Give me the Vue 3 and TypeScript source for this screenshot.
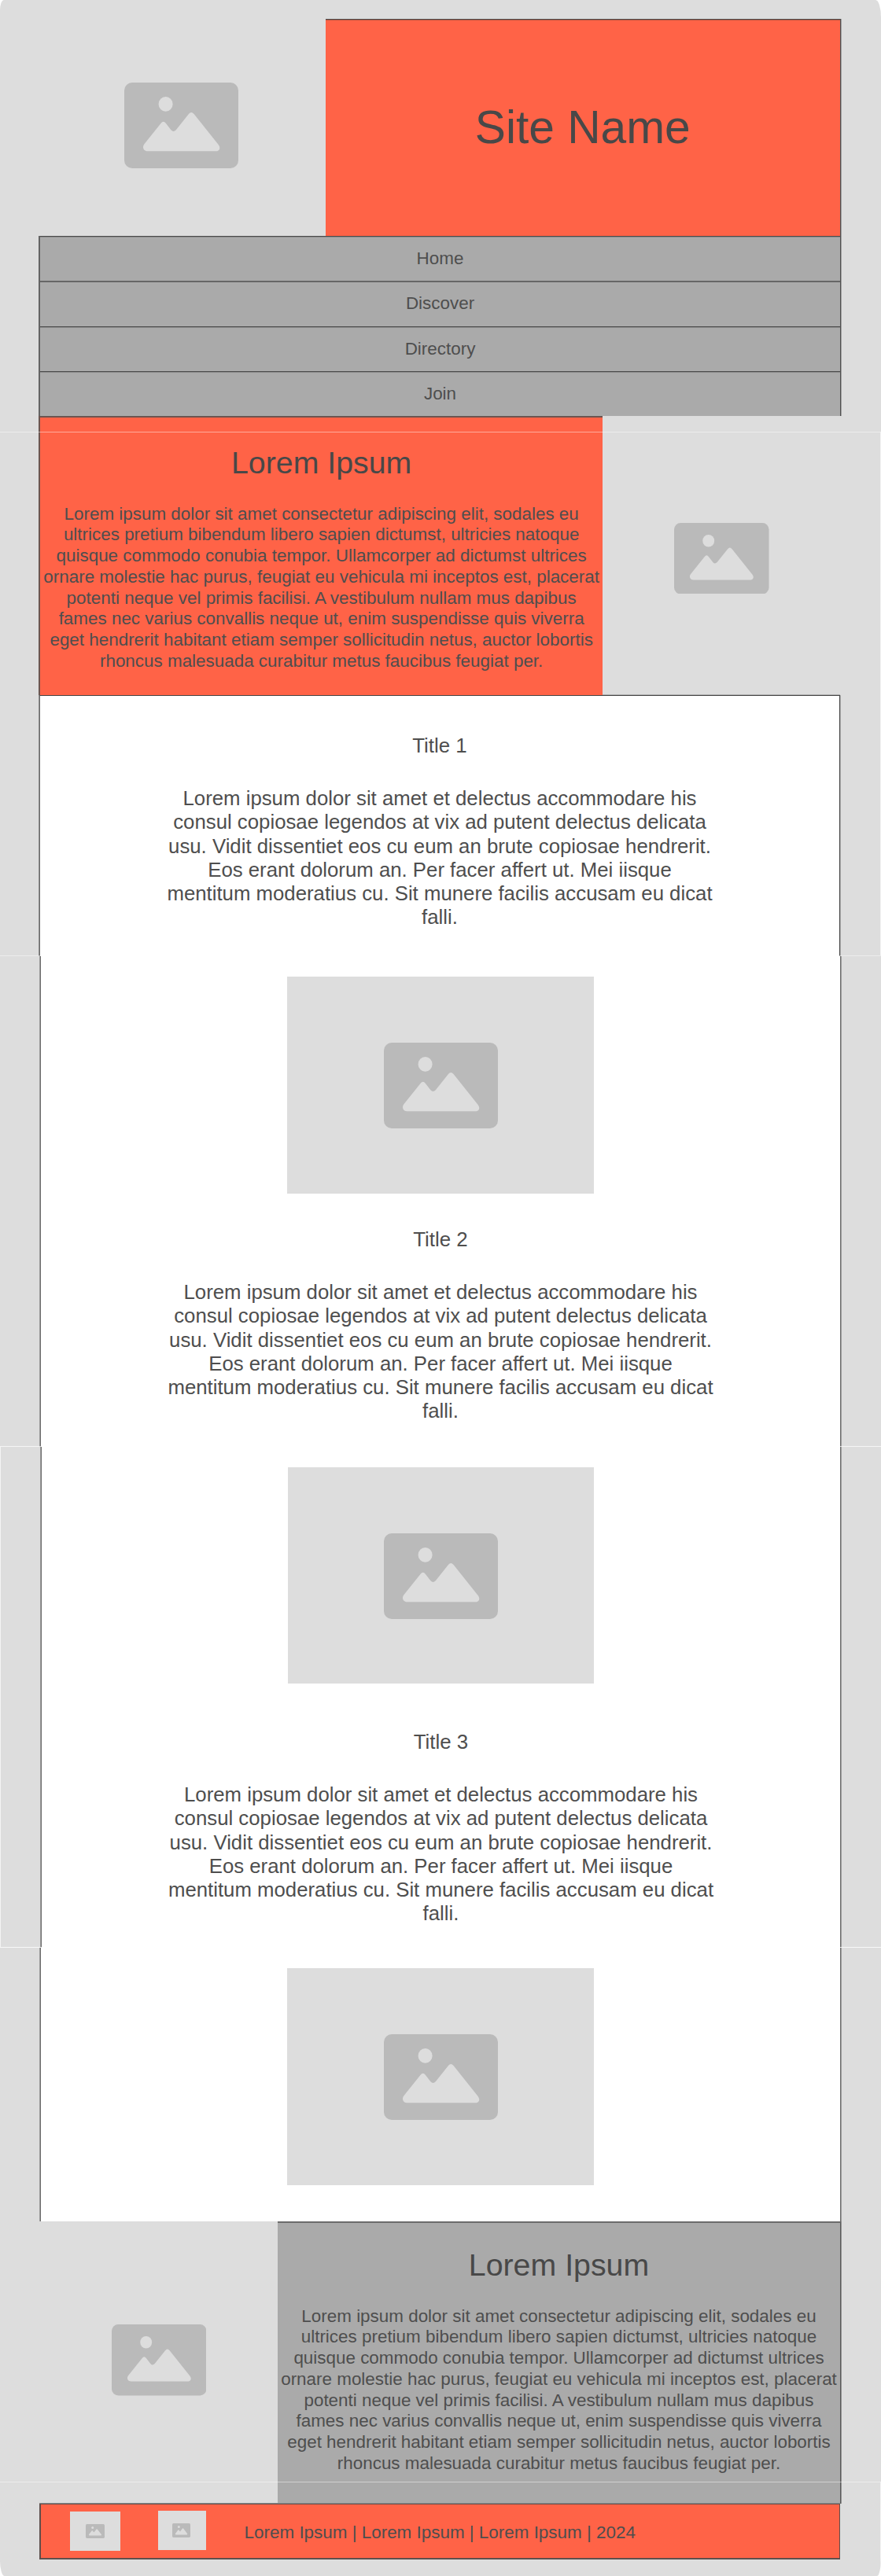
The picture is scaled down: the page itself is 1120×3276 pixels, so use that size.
<script setup lang="ts">
import { defineComponent, h } from 'vue'

const PictureIcon = defineComponent({
  name: 'PictureIcon',
  setup() {
    return () =>
      h('svg', { viewBox: '0 0 145 109', preserveAspectRatio: 'none', 'aria-hidden': 'true' }, [
        h('rect', { width: 145, height: 109, rx: 10, fill: '#bababa' }),
        h('ellipse', { cx: 52.6, cy: 27.4, rx: 9, ry: 9.4, fill: '#ddd' }),
        h('path', {
          d: 'M25.2 78.5 L46.6 51.8 Q49.7 47.8 52.8 51.8 L59.6 60.6 Q62.6 63.6 65.8 60.3 L81.9 40 Q85.2 36 88.6 40 L119.3 78.5 C123.6 84 120 87.3 116.5 87.3 H29.5 C24.5 87.3 22.5 82 25.2 78.5 Z',
          fill: '#ddd',
        }),
      ])
  },
})

interface Block {
  cls: string
  picture: boolean
  title?: string
}

const nav: string[] = ['Home', 'Discover', 'Directory', 'Join']

const intro: string[] = [
  'Lorem ipsum dolor sit amet consectetur adipiscing elit, sodales eu',
  'ultrices pretium bibendum libero sapien dictumst, ultricies natoque',
  'quisque commodo conubia tempor. Ullamcorper ad dictumst ultrices',
  'ornare molestie hac purus, feugiat eu vehicula mi inceptos est, placerat',
  'potenti neque vel primis facilisi. A vestibulum nullam mus dapibus',
  'fames nec varius convallis neque ut, enim suspendisse quis viverra',
  'eget hendrerit habitant etiam semper sollicitudin netus, auctor lobortis',
  'rhoncus malesuada curabitur metus faucibus feugiat per.',
]

const copy: string[] = [
  'Lorem ipsum dolor sit amet et delectus accommodare his',
  'consul copiosae legendos at vix ad putent delectus delicata',
  'usu. Vidit dissentiet eos cu eum an brute copiosae hendrerit.',
  'Eos erant dolorum an. Per facer affert ut. Mei iisque',
  'mentitum moderatius cu. Sit munere facilis accusam eu dicat',
  'falli.',
]

const blocks: Block[] = [
  { cls: 'one', picture: false, title: 'Title 1' },
  { cls: 'two', picture: true, title: 'Title 2' },
  { cls: 'three', picture: true, title: 'Title 3' },
  { cls: 'four', picture: true },
]
</script>

<template>
  <div class="page">
    <header class="masthead">
      <div class="logo"><PictureIcon class="icon-lg" /></div>
      <h1 class="site-name">Site Name</h1>
    </header>

    <nav class="menu">
      <a v-for="item in nav" :key="item" class="menu-item">{{ item }}</a>
    </nav>

    <section class="hero">
      <div class="panel orange">
        <h2>Lorem Ipsum</h2>
        <p><span v-for="line in intro" :key="line">{{ line }}</span></p>
      </div>
      <div class="side"><PictureIcon class="icon-md" /></div>
    </section>

    <main>
      <section v-for="b in blocks" :key="b.cls" class="block" :class="b.cls">
        <div v-if="b.picture" class="picture"><PictureIcon class="icon-lg" /></div>
        <template v-if="b.title">
          <h3>{{ b.title }}</h3>
          <p><span v-for="line in copy" :key="line">{{ line }}</span></p>
        </template>
      </section>
    </main>

    <section class="outro">
      <div class="side"><PictureIcon class="icon-md" /></div>
      <div class="panel gray">
        <h2>Lorem Ipsum</h2>
        <p><span v-for="line in intro" :key="line">{{ line }}</span></p>
      </div>
    </section>

    <footer class="footer">
      <div class="thumb a"><PictureIcon /></div>
      <div class="thumb b"><PictureIcon /></div>
      <span class="legal">Lorem Ipsum | Lorem Ipsum | Lorem Ipsum | 2024</span>
    </footer>

    <i class="seam s1"></i>
    <i class="seam s2"></i>
    <i class="seam s3"></i>
    <i class="seam s4"></i>
    <i class="seam s5"></i>
    <i class="edge e1"></i>
    <i class="edge e2"></i>
    <i class="edge e3"></i>
  </div>
</template>

<style>
body {
  margin: 0;
  background: #fff;
}
</style>

<style scoped>
.page {
  position: relative;
  box-sizing: border-box;
  width: 1120px;
  height: 3276px;
  padding-top: 24px;
  overflow: hidden;
  background: #ddd;
  border-radius: 5px 7px 5px 6px / 13px 22px 24px 19px;
  color: #4e4e4e;
  font-family: 'Liberation Sans', Arial, sans-serif;
  font-size: 22.43px;
}
.page * {
  box-sizing: border-box;
}
h1,
h2,
h3,
p {
  margin: 0;
  font-weight: 400;
  white-space: nowrap;
  text-align: center;
}
p span {
  display: block;
}
svg {
  display: block;
}
.icon-lg {
  width: 145px;
  height: 109px;
}
.icon-md {
  width: 120.5px;
  height: 90.5px;
}
.masthead {
  display: flex;
  width: 1020px;
  height: 276px;
  margin-left: 49px;
}
.logo {
  width: 364.5px;
  padding: 81px 0 0 109.2px;
}
.site-name {
  flex: 1;
  border-top: 1px solid #4a4a4a;
  border-right: 1px solid #4f4f4f;
  box-shadow: 1px 0 #a0a0a0, inset 0 1px #b8553f;
  background: #ff6347;
  color: #484848;
  font-size: 58.7px;
  line-height: 274px;
}
.menu {
  display: grid;
  grid-template-rows: 57px 58px 57px 57px;
  width: 1020px;
  margin-left: 49px;
  border-left: 2px solid #636363;
  border-right: 1px solid #4f4f4f;
  box-shadow: 1px 0 #a0a0a0;
  background: #aaa;
}
.menu-item {
  border-top: 1px solid #4a4a4a;
  box-shadow: inset 0 1px #8c8c8c;
  text-align: center;
  line-height: 56.2px;
}
.menu-item:nth-child(2) {
  border-top: 2px solid #666;
  box-shadow: none;
  line-height: 54.5px;
}
.hero {
  display: flex;
  height: 355px;
  margin-left: 49px;
}
.panel h2 {
  color: #484848;
  font-size: 39.3px;
  line-height: 46px;
}
.panel p {
  line-height: 26.76px;
}
.orange {
  width: 717.3px;
  padding-top: 34px;
  border-top: 2px solid #6b5550;
  border-left: 2px solid #6b5550;
  background: #ff6347;
}
.orange p {
  margin-top: 29.5px;
}
.hero .side {
  padding: 135.5px 0 0 90.8px;
}
.block {
  border: solid #6c6c6c;
  border-width: 0 1px 0 1px;
  box-shadow: 1px 0 #9c9c9c, -1px 0 #9c9c9c;
  background: #fff;
}
.one {
  width: 1018px;
  height: 332px;
  margin-left: 50px;
  padding-top: 47.5px;
  border-top: 1px solid #444;
  border-right-color: #444;
  box-shadow: 1px 0 #b0b0b0, 0 -1px #b0b0b0, -1px 0 #8c8c8c;
}
.two {
  width: 1018px;
  height: 624px;
  margin-left: 51px;
  padding-top: 25.5px;
}
.three {
  width: 1017px;
  height: 637px;
  margin-left: 52px;
  padding-top: 26px;
}
.four {
  width: 1018px;
  height: 348px;
  margin-left: 51px;
  padding-top: 26px;
}
.block h3 {
  font-size: 25.9px;
  line-height: 30px;
}
.two h3 {
  margin-top: 43.2px;
}
.three h3 {
  margin-top: 58.5px;
}
.block p {
  margin-top: 37.5px;
  font-size: 25.78px;
  line-height: 30.25px;
}
.picture {
  width: 389.6px;
  height: 276px;
  margin: 0 auto;
  padding: 84px 0 0 122.3px;
  background: #ddd;
}
.three .picture {
  height: 275px;
}
.outro {
  display: flex;
  width: 1020px;
  height: 359px;
  margin-left: 49px;
}
.outro .side {
  width: 304px;
  padding: 131px 0 0 92.5px;
}
.gray {
  width: 716px;
  padding-top: 30px;
  border-top: 2px solid #6c6c6c;
  border-right: 1px solid #5a5a5a;
  box-shadow: 1px 0 #909090;
  background: #aaa;
}
.gray p {
  margin-top: 29.5px;
}
.footer {
  position: relative;
  display: flex;
  width: 1018px;
  height: 71px;
  margin-left: 50px;
  border: solid #5f4f4c;
  border-width: 1px 1px 2px 2px;
  box-shadow: 0 -1px #8c8c8c;
  background: #ff6347;
}
.thumb {
  width: 63.5px;
  height: 49.5px;
  margin: 9.3px 0 0 37px;
  padding: 15.7px 0 0 20px;
  background: #ddd;
}
.thumb svg {
  width: 24px;
  height: 18px;
}
.thumb.b {
  width: 61px;
  margin: 8.2px 0 0 48.5px;
  padding-left: 18px;
}
.thumb.b svg {
  width: 23px;
}
.legal {
  margin-left: 48.6px;
  line-height: 72px;
  white-space: nowrap;
}
.seam {
  position: absolute;
  left: 0;
  width: 1120px;
  height: 1px;
  background: rgba(255, 255, 255, 0.45);
}
.s1 {
  top: 549px;
}
.s2 {
  top: 1215px;
}
.s3 {
  top: 1839px;
  background: rgba(255, 255, 255, 0.7);
}
.s4 {
  top: 2476px;
  background: rgba(255, 255, 255, 0.8);
}
.s5 {
  top: 3156px;
}
.edge {
  position: absolute;
  width: 1px;
  background: #f3f3f3;
}
.e1 {
  top: 549px;
  right: 0;
  height: 666px;
}
.e2 {
  top: 1839px;
  left: 0;
  height: 637px;
}
.e3 {
  top: 3156px;
  right: 0;
  height: 120px;
}
</style>
